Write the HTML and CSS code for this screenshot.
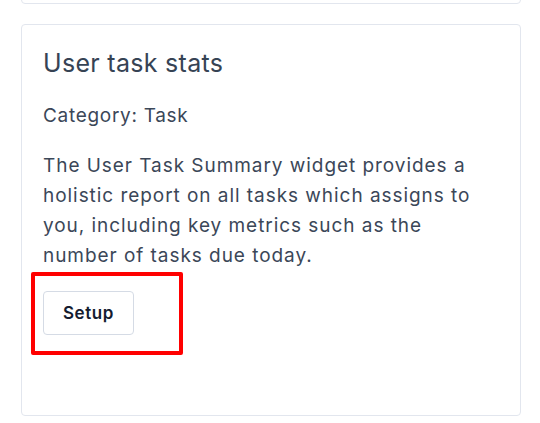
FILE: index.html
```html
<!DOCTYPE html>
<html lang="en">
<head>
<meta charset="utf-8">
<title>User task stats</title>
<link rel="stylesheet" href="styles.css">
</head>
<body>
<div class="page">
  <div class="card card-prev"></div>
  <div class="card widget">
    <h2 class="widget-title">User task stats</h2>
    <p class="widget-category">Category: Task</p>
    <p class="widget-desc">The User Task Summary widget provides a holistic report on all tasks which assigns to you, including key metrics such as the number of tasks due today.</p>
    <div class="actions">
      <button class="btn" type="button">Setup</button>
      <span class="highlight"></span>
    </div>
  </div>
</div>
</body>
</html>
```
FILE: styles.css
```css
html, body {
  margin: 0;
  padding: 0;
  background: #ffffff;
}
body {
  font-family: Inter, "Liberation Sans", sans-serif;
  color: #3b4758;
}
.page {
  padding: 0 19px 0 21px;
}
.card {
  border: 1px solid #e2e6ee;
  border-radius: 4px;
  background: #fff;
}
.card-prev {
  height: 20px;
  margin-top: -18px;
  border-top-left-radius: 0;
  border-top-right-radius: 0;
}
.widget {
  margin-top: 20px;
  padding: 22px 21px 80px 21px;
}
.widget-title {
  margin: 0;
  font-size: 25px;
  line-height: 32px;
  font-weight: 400;
  letter-spacing: 0.3px;
  color: #364354;
}
.widget-category {
  margin: 22px 0 0;
  font-size: 19px;
  line-height: 30px;
  letter-spacing: 0.7px;
}
.widget-desc {
  margin: 20px 0 0;
  font-size: 19px;
  line-height: 30px;
  letter-spacing: 0.95px;
}
.actions {
  position: relative;
  margin-top: 20px;
}
.btn {
  width: 91px;
  height: 44px;
  border: 1px solid #d5dbe5;
  border-radius: 4px;
  background: #fff;
  font-family: Inter, "Liberation Sans", sans-serif;
  font-size: 17px;
  font-weight: 600;
  letter-spacing: 0.6px;
  color: #141c30;
  padding: 0;
}
.highlight {
  position: absolute;
  left: -12px;
  top: -19px;
  width: 144px;
  height: 75px;
  border: 4px solid #ff0000;
  border-radius: 2px;
}
```
